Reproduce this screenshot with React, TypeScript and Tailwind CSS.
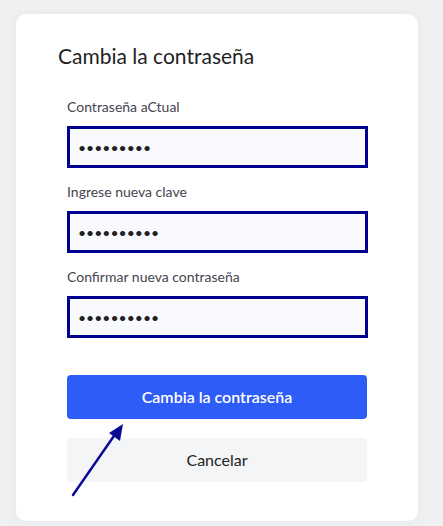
import React from "react";

const fields = [
  { label: "Contraseña aCtual", value: "123456789" },
  { label: "Ingrese nueva clave", value: "1234567890" },
  { label: "Confirmar nueva contraseña", value: "1234567890" },
];

export default function App() {
  return (
    <div
      className="min-h-[526px] w-full bg-[#eef0f2] pt-[14px] pl-4"
      style={{ fontFamily: "Lato, 'Noto Sans', sans-serif" }}
    >
      <div className="relative w-[402px] h-[507px] rounded-[10px] bg-white shadow-[0_0_12px_rgba(0,0,0,0.04)] pt-[28px] pl-[42px]">
        <h1 className="text-[21px] leading-7 text-[#1f1f24]">Cambia la contraseña</h1>

        <form className="ml-[9px] mt-[27px] w-[301px]">
          {fields.map((f, i) => (
            <div key={i} className={i === 0 ? "" : "mt-[14px]"}>
              <label className="block text-[14px] leading-5 text-[#45454f]">{f.label}</label>
              <input
                type="password"
                readOnly
                defaultValue={f.value}
                className="mt-[9px] block h-[42px] w-[301px] border-[3px] border-[#000090] bg-[#f8fafd] px-[8px] text-[14px] tracking-normal text-[#222] outline-none"
              />
            </div>
          ))}

          <button
            type="button"
            className="mt-[37px] block h-[44px] w-[300px] rounded-[4px] bg-[#2e5cf7] text-[16px] font-semibold text-white"
          >
            Cambia la contraseña
          </button>
          <button
            type="button"
            className="mt-[19px] block h-[44px] w-[300px] rounded-[4px] bg-[#f4f5f7] text-[16px] text-[#222]"
          >
            Cancelar
          </button>
        </form>

        <svg
          className="absolute left-[52px] top-[405px]"
          width="60"
          height="80"
          viewBox="0 0 60 80"
        >
          <line x1="5" y1="76" x2="48" y2="14" stroke="#0a0a96" strokeWidth="2.5" strokeLinecap="round" />
          <polygon points="55,5 52,22 41,14" fill="#0a0a96" />
        </svg>
      </div>
    </div>
  );
}
